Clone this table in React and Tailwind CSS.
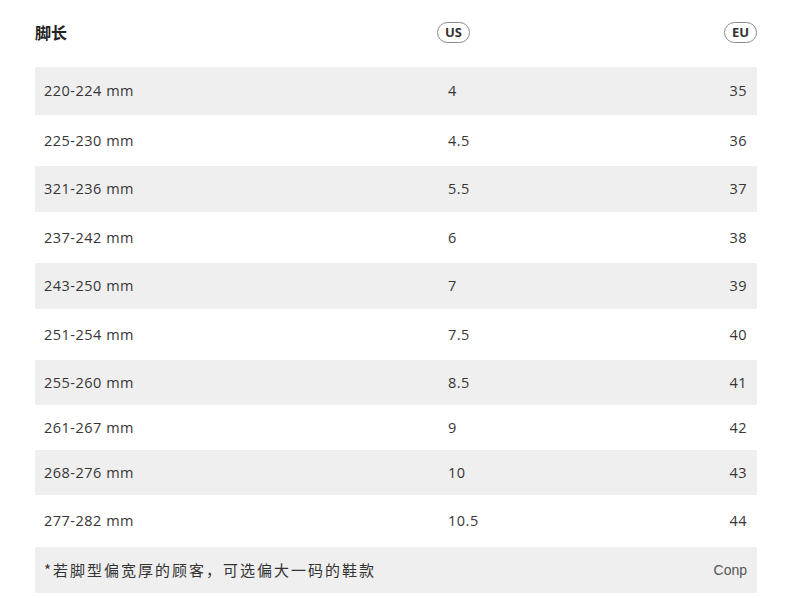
import React from "react";

const rows = [
  { mm: "220-224 mm", us: "4", eu: "35", shade: true, h: "h-[48px]" },
  { mm: "225-230 mm", us: "4.5", eu: "36", shade: false, h: "h-[51px]" },
  { mm: "321-236 mm", us: "5.5", eu: "37", shade: true, h: "h-[46px]" },
  { mm: "237-242 mm", us: "6", eu: "38", shade: false, h: "h-[51px]" },
  { mm: "243-250 mm", us: "7", eu: "39", shade: true, h: "h-[46px]" },
  { mm: "251-254 mm", us: "7.5", eu: "40", shade: false, h: "h-[51px]" },
  { mm: "255-260 mm", us: "8.5", eu: "41", shade: true, h: "h-[45px]" },
  { mm: "261-267 mm", us: "9", eu: "42", shade: false, h: "h-[45px]" },
  { mm: "268-276 mm", us: "10", eu: "43", shade: true, h: "h-[45px]" },
  { mm: "277-282 mm", us: "10.5", eu: "44", shade: false, h: "h-[52px]" },
];

function Pill({ children }) {
  return (
    <span className="inline-flex items-center justify-center h-[21px] px-[7px] rounded-full border border-[#8a8a8a] text-[13px] font-bold text-[#333] leading-none">
      {children}
    </span>
  );
}

export default function App() {
  return (
    <div
      className="w-[790px] h-[598px] bg-white text-[#363636] overflow-hidden"
      style={{ fontFamily: '"Open Sans", "Noto Sans CJK SC", sans-serif' }}
    >
      <div className="pl-[35px] pr-[33px]">
        <div className="h-[67px] flex items-center pb-[1px]">
          <div className="w-[402px] text-[16px] font-bold text-[#222] -mt-[2px]" style={{ fontFamily: '"Noto Sans CJK SC", sans-serif' }}>
            脚长
          </div>
          <div className="flex-1 flex justify-between -mt-[1px]">
            <Pill>US</Pill>
            <Pill>EU</Pill>
          </div>
        </div>
        {rows.map((r) => (
          <div
            key={r.mm}
            className={`${r.h} flex items-center text-[14.5px] tracking-[0.5px] ${r.shade ? "bg-[#efefef]" : "bg-white"}`}
          >
            <div className="w-[413px] pl-[9px]">{r.mm}</div>
            <div className="flex-1">{r.us}</div>
            <div className="pr-[10px]">{r.eu}</div>
          </div>
        ))}
        <div className="h-[46px] flex items-center bg-[#efefef]">
          <div
            className="flex-1 pl-[9px] text-[15px] tracking-[2px] text-[#333]"
            style={{ fontFamily: '"Noto Sans CJK SC", sans-serif' }}
          >
            *若脚型偏宽厚的顾客，可选偏大一码的鞋款
          </div>
          <div className="pr-[10px] text-[14px] text-[#555]" style={{ fontFamily: '"Liberation Sans", sans-serif' }}>
            Conp
          </div>
        </div>
      </div>
    </div>
  );
}
